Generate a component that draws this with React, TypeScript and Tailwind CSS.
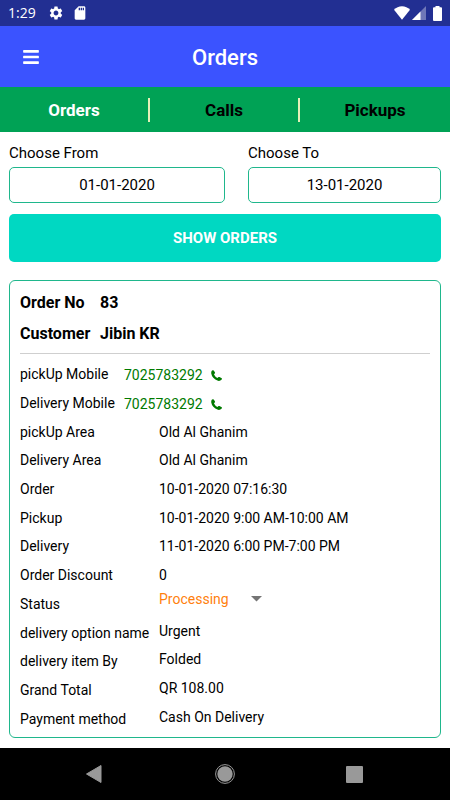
import { useState } from "react";
import { FaBars } from "react-icons/fa";
import { MdSettings, MdSdCard } from "react-icons/md";

const tabs = ["Orders", "Calls", "Pickups"];

type Detail = { label: string; value: string };

const mobiles: Detail[] = [
  { label: "pickUp Mobile", value: "7025783292" },
  { label: "Delivery Mobile", value: "7025783292" },
];

const schedule: Detail[] = [
  { label: "pickUp Area", value: "Old Al Ghanim" },
  { label: "Delivery Area", value: "Old Al Ghanim" },
  { label: "Order", value: "10-01-2020 07:16:30" },
  { label: "Pickup", value: "10-01-2020 9:00 AM-10:00 AM" },
  { label: "Delivery", value: "11-01-2020 6:00 PM-7:00 PM" },
  { label: "Order Discount", value: "0" },
];

const summary: Detail[] = [
  { label: "delivery option name", value: "Urgent" },
  { label: "delivery item By", value: "Folded" },
  { label: "Grand Total", value: "QR 108.00" },
  { label: "Payment method", value: "Cash On Delivery" },
];

function StatusBar() {
  return (
    <div className="flex h-[26px] items-center bg-[#222f92] pl-2 pr-2 text-white">
      <span className="w-10 font-['Open_Sans',sans-serif] text-sm font-medium">1:29</span>
      <MdSettings className="size-4" />
      <MdSdCard className="ml-2 size-4" />
      <div className="ml-auto flex items-center gap-[2px]">
        <svg viewBox="0 0 16 14" className="h-[14px] w-4" fill="currentColor">
          <path d="M8 13.7 0 3.8C2 1.5 5 0.3 8 0.3s6 1.2 8 3.5z" />
        </svg>
        <svg viewBox="0 0 14 14" className="size-[14px]" fill="currentColor">
          <path d="M14 0v14H0z" opacity="0.35" />
          <path d="M8.500 5.500V14H0z" />
        </svg>
        <svg viewBox="0 0 9 15" className="ml-[5px] h-[15px] w-[9px]" fill="currentColor">
          <path d="M2.500 1.200V0h4v1.200H8q1 0 1 1V14q0 1-1 1H1q-1 0-1-1V2.200q0-1 1-1z" />
        </svg>
      </div>
    </div>
  );
}

function PhoneIcon() {
  return (
    <svg viewBox="0 0 22 22" className="size-[11px]" fill="currentColor">
      <path d="M2 1Q4 0 5.500 1L8 5Q8.500 6.500 7 7.500L6 9Q8 13.500 13 16L15 14Q16 13.500 17 14L21.500 16.500Q22.500 17.500 21 19.500Q18 22.500 14 21.500Q2 17 .5 7Q0 3 2 1z" />
    </svg>
  );
}

function DateField({ id, label, initial }: { id: string; label: string; initial: string }) {
  const [value, setValue] = useState(initial);
  return (
    <div className="flex min-w-0 flex-col gap-1">
      <label htmlFor={id} className="text-[15px] leading-5">
        {label}
      </label>
      <input
        id={id}
        type="text"
        value={value}
        onChange={(e) => setValue(e.target.value)}
        className="h-9 w-full rounded-[5px] border border-[#1fb78c] text-center text-[15px]"
      />
    </div>
  );
}

function DetailRow({ label, value, raised }: Detail & { raised?: boolean }) {
  return (
    <div className="flex items-center">
      <dt className="w-[139px] whitespace-nowrap">{label}</dt>
      <dd className={raised ? "pb-1" : ""}>{value}</dd>
    </div>
  );
}

export default function App() {
  const [active, setActive] = useState("Orders");
  const [status, setStatus] = useState("Processing");

  return (
    <div className="flex min-h-screen flex-col bg-white font-['Roboto',sans-serif] text-black">
      <StatusBar />
      <header className="grid h-[61px] grid-cols-[1fr_auto_1fr] items-center bg-[#3b53ff] px-[22px] text-white">
        <button type="button" aria-label="Menu" className="justify-self-start">
          <FaBars className="size-[18px]" />
        </button>
        <h1 className="pt-[2px] text-[22px] font-medium">Orders</h1>
      </header>
      <nav className="grid h-[45px] grid-cols-3 items-center divide-x-2 divide-[#e6f0b8] bg-[#00a255]">
        {tabs.map((tab) => (
          <button
            key={tab}
            type="button"
            onClick={() => setActive(tab)}
            className={
              active === tab
                ? "h-6 text-[17px] font-bold leading-6 text-white"
                : "h-6 text-[17px] font-bold leading-6 text-black"
            }
          >
            {tab}
          </button>
        ))}
      </nav>

      <main className="flex flex-1 flex-col px-[9px] pb-[10px] pt-[11px]">
        <div className="grid grid-cols-[216fr_193fr] gap-[23px]">
          <DateField id="from" label="Choose From" initial="01-01-2020" />
          <DateField id="to" label="Choose To" initial="13-01-2020" />
        </div>
        <button
          type="button"
          className="mt-[11px] h-12 rounded-[5px] bg-[#00d8c2] text-[15px] font-bold text-white"
        >
          SHOW ORDERS
        </button>

        <section className="mt-[18px] flex flex-1 flex-col rounded-md border border-[#1fb78c] px-[10px] pb-1 pt-[6px]">
          <dl className="grid grid-cols-[80px_1fr] text-base font-bold leading-[31px]">
            <dt>Order No</dt>
            <dd>83</dd>
            <dt>Customer</dt>
            <dd>Jibin KR</dd>
          </dl>
          <hr className="mb-[6px] mt-1 border-[#cfcfcf]" />
          <dl className="grid flex-1 auto-rows-fr text-sm">
            {mobiles.map((m) => (
              <div key={m.label} className="flex items-center">
                <dt className="w-[104px] whitespace-nowrap">{m.label}</dt>
                <dd className="pt-[2px]">
                  <a href={`tel:${m.value}`} className="flex items-center gap-2 text-[#007a00]">
                    {m.value}
                    <PhoneIcon />
                  </a>
                </dd>
              </div>
            ))}
            {schedule.map((d) => (
              <DetailRow key={d.label} {...d} />
            ))}
            <div className="flex items-center">
              <dt className="w-[139px]">
                <label htmlFor="status">Status</label>
              </dt>
              <dd className="flex items-center pb-[10px] text-[#ff7f0e]">
                <select
                  id="status"
                  value={status}
                  onChange={(e) => setStatus(e.target.value)}
                  className="h-[18px] w-[92px] appearance-none leading-[18px]"
                >
                  <option>Processing</option>
                  <option>Delivered</option>
                </select>
                <svg viewBox="0 0 11 6" className="h-[6px] w-[11px]" fill="#757575">
                  <path d="M0 0h11L5.500 5.500z" />
                </svg>
              </dd>
            </div>
            {summary.map((d) => (
              <DetailRow key={d.label} {...d} raised />
            ))}
          </dl>
        </section>
      </main>

      <footer className="grid h-[52px] grid-cols-[1fr_auto_1fr] items-center bg-black px-[85px] text-[#999]">
        <button type="button" aria-label="Back" className="justify-self-start">
          <svg viewBox="0 0 18 20" className="h-5 w-[18px]" fill="currentColor">
            <path d="M16 1.500v17L1.500 10z" stroke="currentColor" strokeLinejoin="round" />
          </svg>
        </button>
        <button type="button" aria-label="Home">
          <svg viewBox="0 0 20 20" className="size-5">
            <circle cx="10" cy="10" r="9.400" fill="none" stroke="currentColor" />
            <circle cx="10" cy="10" r="7.700" fill="currentColor" />
          </svg>
        </button>
        <button type="button" aria-label="Recent apps" className="justify-self-end pr-[2px]">
          <span className="block size-[17px] rounded-[1px] bg-current" />
        </button>
      </footer>
    </div>
  );
}
